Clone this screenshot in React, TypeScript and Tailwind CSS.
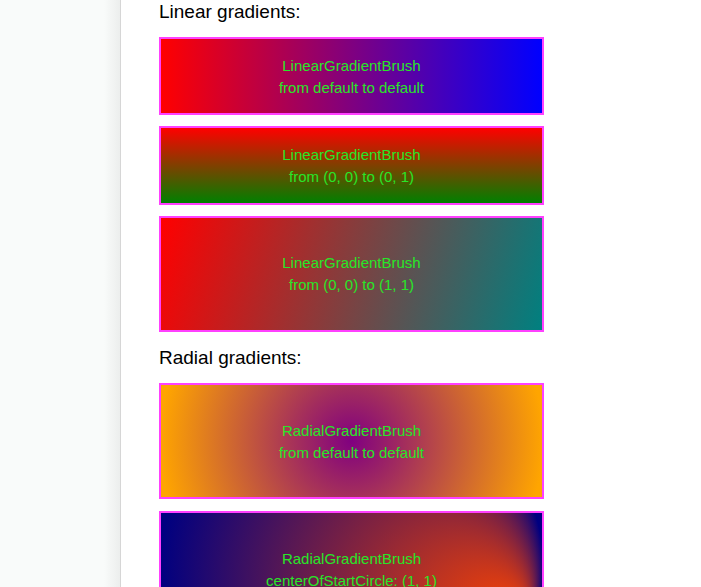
import React from 'react';

const boxBase =
  'w-[385px] border-2 border-[#ff40ff] flex flex-col items-center justify-center text-[15px] leading-[22px] text-[#28e628]';

function Heading({ children, first }: { children: React.ReactNode; first?: boolean }) {
  return (
    <div className={`${first ? 'mt-0' : 'mt-[14px]'} mb-[13px] text-[19px] leading-[24px] text-black`}>
      {children}
    </div>
  );
}

export default function App() {
  return (
    <div className="flex w-full h-screen overflow-hidden bg-white" style={{ fontFamily: '"Liberation Sans", Arial, sans-serif' }}>
      {/* sidebar */}
      <div className="w-[121px] shrink-0 h-full flex border-r border-[#d6d6d6] bg-[#f9fbfa]">
        <div className="flex-1" />
        <div className="w-[16px] h-full bg-gradient-to-r from-[#f9fbfa] to-[#eceeed]" />
      </div>

      {/* content */}
      <div className="flex-1 pl-[38px] pt-0">
        <Heading first>Linear gradients:</Heading>

        <div className="flex flex-col gap-[11px]">
          <div className={`${boxBase} h-[78px] pt-[1px] bg-[linear-gradient(to_right,#ff0000,#0000ff)]`}>
            <span>LinearGradientBrush</span>
            <span>from default to default</span>
          </div>
          <div className={`${boxBase} h-[79px] pt-[1px] bg-[linear-gradient(to_bottom,#ff0000,#008000)]`}>
            <span>LinearGradientBrush</span>
            <span>from (0, 0) to (0, 1)</span>
          </div>
          <div className={`${boxBase} h-[116px] bg-[linear-gradient(106.8deg,#ff0000,#008080)]`}>
            <span>LinearGradientBrush</span>
            <span>from (0, 0) to (1, 1)</span>
          </div>
        </div>

        <Heading>Radial gradients:</Heading>

        <div className="flex flex-col gap-[12px]">
          <div className={`${boxBase} h-[116px] pt-[2px] bg-[radial-gradient(circle_192px_at_center,#800080,#ffa500)]`}>
            <span>RadialGradientBrush</span>
            <span>from default to default</span>
          </div>
          <div className={`${boxBase} h-[116px] pt-[2px] relative overflow-hidden`}>
            <svg className="absolute inset-0 w-full h-full" viewBox="0 0 381 112" preserveAspectRatio="none">
              <defs>
                <radialGradient id="startCircle" gradientUnits="userSpaceOnUse" cx="190.5" cy="56" r="192" fx="362" fy="106">
                  <stop offset="0" stopColor="#ff4500" />
                  <stop offset="1" stopColor="#000080" />
                </radialGradient>
              </defs>
              <rect x="0" y="0" width="381" height="112" fill="url(#startCircle)" />
            </svg>
            <span className="relative">RadialGradientBrush</span>
            <span className="relative">centerOfStartCircle: (1, 1)</span>
          </div>
        </div>
      </div>
    </div>
  );
}
